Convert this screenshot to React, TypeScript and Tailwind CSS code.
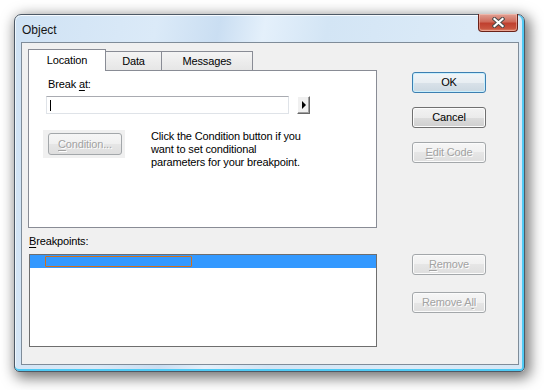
import React from 'react';

type Kind = 'normal' | 'default' | 'disabled';

const font = "font-['Liberation_Sans',Arial,sans-serif] text-[11px] leading-[13px] tracking-[-0.15px]";

function PushButton({ kind = 'normal', children }: { kind?: Kind; children: React.ReactNode }) {
  const look =
    kind === 'default'
      ? 'border-[#3c7fb1] bg-[linear-gradient(#f1f5f8_0%,#e8eef2_50%,#d9e2e9_50%,#ccd8e1_100%)] shadow-[inset_0_0_0_1px_#c9effd] text-black'
      : kind === 'disabled'
        ? 'border-[#a3a7aa] bg-[linear-gradient(#f6f6f6_0%,#f0f0f0_50%,#e6e6e6_50%,#dedede_100%)] shadow-[inset_0_0_0_1px_#fbfbfb] text-[#a2a2a2] [text-shadow:1px_1px_0_#ffffff]'
        : 'border-[#707070] bg-[linear-gradient(#f2f2f2_0%,#ebebeb_50%,#dddddd_50%,#cfcfcf_100%)] shadow-[inset_0_0_0_1px_#fcfcfc] text-black';
  return (
    <div className={`flex h-[21px] w-[74px] items-center justify-center rounded-[3px] border ${look}`}>
      {children}
    </div>
  );
}

function CloseGlyph() {
  return (
    <svg width="13" height="11" viewBox="0 0 13 11">
      <path d="M2.5 2 L10.5 9 M10.5 2 L2.5 9" stroke="#4a4a4a" strokeWidth="4.2" strokeLinecap="square" />
      <path d="M2.5 2 L10.5 9 M10.5 2 L2.5 9" stroke="#ffffff" strokeWidth="2.2" strokeLinecap="square" />
    </svg>
  );
}

export default function App() {
  return (
    <div className={`min-h-[390px] bg-white pl-[14px] pt-[14px] ${font}`}>
      <div className="flex h-[358px] w-[511px] flex-col rounded-t-[7px] rounded-b-[5px] border border-[#4d5966] bg-[linear-gradient(100deg,#cfe2f4_0%,#dbeaf8_25%,#cadef2_36%,#e4f0fb_44%,#d3e5f5_55%,#dcebf8_80%,#d5e7f6_100%)] shadow-[inset_0_-2px_0_#4fcaf4,inset_-2px_0_0_#4fcaf4,inset_1px_0_0_#eef6fc,inset_0_1px_0_#f6fafe,3px_4px_14px_2px_rgba(0,0,0,0.55)]">
        {/* title bar */}
        <div className="flex h-[27px] items-start justify-between">
          <div className="pl-[7px] pt-[8px] text-[12px] leading-[14px] tracking-normal text-[#141414]">
            Object
          </div>
          <div className="-mt-px mr-[6px] flex h-[18px] w-[40px] items-center justify-center rounded-b-[4px] border border-t-0 border-[#6a2219] bg-[linear-gradient(#e1a194_0%,#cf6b5b_45%,#c0402f_55%,#c8543f_85%,#e08a70_100%)] shadow-[inset_0_0_0_1px_rgba(255,210,200,0.45)]">
            <CloseGlyph />
          </div>
        </div>

        {/* client area */}
        <div className="ml-[6px] mr-[5px] flex h-[323px] border border-[#7f8c99] bg-[#f0f0f0]">
          {/* left column */}
          <div className="ml-[6px] flex w-[349px] flex-col pt-[6px]">
            <div className="flex h-[21px] items-end">
              <div className="relative z-10 -mb-px flex h-[22px] w-[78px] items-center justify-center border border-b-0 border-[#898c95] bg-white pb-px">
                Location
              </div>
              <div className="-ml-px flex h-[19px] w-[57px] items-center justify-center border border-b-0 border-[#898c95] bg-[linear-gradient(#f4f4f4,#e6e6e6)]">
                Data
              </div>
              <div className="-ml-px flex h-[19px] w-[92px] items-center justify-center border border-b-0 border-[#898c95] bg-[linear-gradient(#f4f4f4,#e6e6e6)]">
                Messages
              </div>
            </div>

            <div className="h-[158px] w-[349px] border border-[#898c95] bg-white">
              <div className="pl-[19px] pt-[7px]">
                Break <span className="underline underline-offset-[2px]">a</span>t:
              </div>
              <div className="ml-[17px] mt-[5px] flex items-center">
                <div className="flex h-[18px] w-[243px] items-center border border-[#dfe3e8] border-t-[#a9abb1]">
                  <span className="ml-[3px] h-[11px] w-px bg-black" />
                </div>
                <div className="ml-[8px] flex h-[18px] w-[13px] items-center justify-center border border-t-white border-l-white border-r-[#696969] border-b-[#696969] bg-[#f0f0f0] shadow-[inset_-1px_-1px_0_#a0a0a0]">
                  <span className="h-0 w-0 border-y-[4px] border-l-[4px] border-y-transparent border-l-black" />
                </div>
              </div>
              <div className="mt-[16px] flex items-start">
                <div className="ml-[14px] h-[28px] w-[82px] bg-[#f0f0f0] pl-[5px] pt-[3px]">
                  <div className="flex h-[22px] w-[74px] items-center justify-center rounded-[3px] border border-[#a3a7aa] bg-[linear-gradient(#f6f6f6_0%,#f0f0f0_50%,#e6e6e6_50%,#dedede_100%)] text-[#a2a2a2] [text-shadow:1px_1px_0_#ffffff]">
                    <span>
                      <span className="underline underline-offset-[2px]">C</span>ondition...
                    </span>
                  </div>
                </div>
                <div className="ml-[26px] text-black">
                  Click the Condition button if you
                  <br />
                  want to set conditional
                  <br />
                  parameters for your breakpoint.
                </div>
              </div>
            </div>

            <div className="mt-[7px] pl-px">
              <span className="underline underline-offset-[2px]">B</span>reakpoints:
            </div>
            <div className="ml-px mt-[6px] h-[93px] w-[348px] border border-[#6e6e6e] bg-white">
              <div className="h-[13px] bg-[#3399ff] pl-[15px] pt-[1px]">
                <div className="h-[11px] w-[147px] rounded-[1px] border border-[#d2701a]" />
              </div>
            </div>
          </div>

          {/* right column */}
          <div className="ml-[35px] flex flex-col pt-[29px]">
            <PushButton kind="default">OK</PushButton>
            <div className="mt-[14px]">
              <PushButton>Cancel</PushButton>
            </div>
            <div className="mt-[14px]">
              <PushButton kind="disabled">
                <span>
                  <span className="underline underline-offset-[2px]">E</span>dit Code
                </span>
              </PushButton>
            </div>
            <div className="mt-[91px]">
              <PushButton kind="disabled">
                <span>
                  <span className="underline underline-offset-[2px]">R</span>emove
                </span>
              </PushButton>
            </div>
            <div className="mt-[17px]">
              <PushButton kind="disabled">
                <span>
                  Remove A<span className="underline underline-offset-[2px]">l</span>l
                </span>
              </PushButton>
            </div>
          </div>
        </div>
      </div>
    </div>
  );
}
